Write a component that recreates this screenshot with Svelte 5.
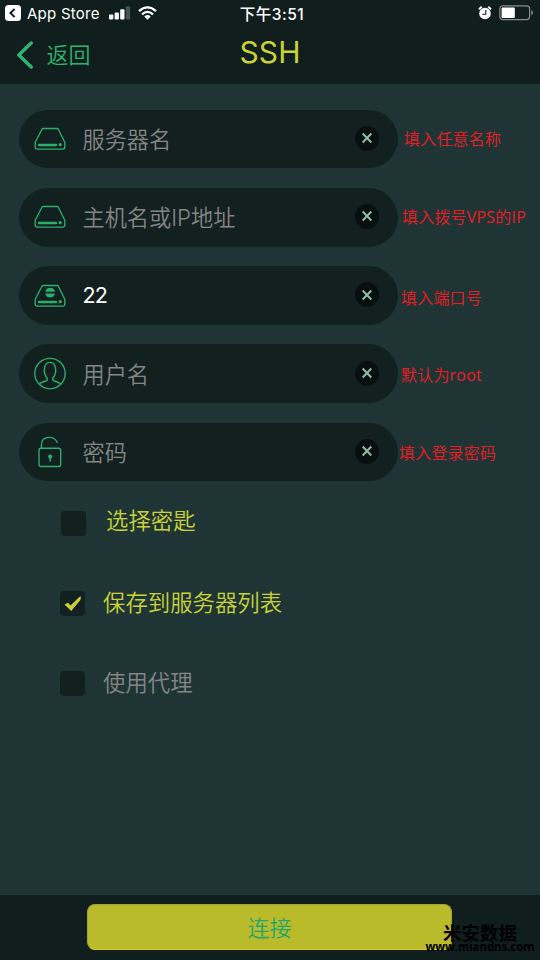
<script>
  const fields = [
    { icon: 'drive', hint: '服务器名', note: '填入任意名称', noteLeft: 6, noteDrop: 0 },
    { icon: 'drive', hint: '主机名或IP地址', note: '填入拨号VPS的IP', noteLeft: 4, noteDrop: 0 },
    { icon: 'port', value: '22', note: '填入端口号', noteLeft: 3, noteDrop: 2 },
    { icon: 'user', hint: '用户名', note: '默认为root', noteLeft: 3, noteDrop: 1.5 },
    { icon: 'lock', hint: '密码', note: '填入登录密码', noteLeft: 1, noteDrop: 0.5 }
  ];
  const options = [
    { label: '选择密匙', tone: 'lit', checked: false, left: 61, gap: 20, lift: 3 },
    { label: '保存到服务器列表', tone: 'lit', checked: true, left: 60, gap: 18, lift: 1 },
    { label: '使用代理', tone: 'dim', checked: false, left: 60, gap: 18, lift: 1 }
  ];
</script>

<main class="screen">
  <header>
    <div class="status">
      <div class="left">
        <svg class="back-app" width="16" height="16" viewBox="0 0 16 16"><rect width="16" height="16" rx="3.5" fill="#fff" /><path d="M9.6 4 5.4 8l4.2 4" fill="none" stroke="#101e1d" stroke-width="1.9" /></svg>
        <span class="store">App Store</span>
        <svg class="signal" width="22" height="14" viewBox="0 0 22 14" fill="#fff"><rect x="0" y="8.5" width="4.3" height="5" rx="1" /><rect x="5.6" y="6.5" width="4.3" height="7" rx="1" /><rect x="11.2" y="3.3" width="4.3" height="10.2" rx="1" /><rect x="16.8" y="0.3" width="4.3" height="13.2" rx="1" fill="#475352" /></svg>
        <svg class="wifi" width="19" height="14" viewBox="0 0 19 14"><g fill="none" stroke="#fff" stroke-width="2.3"><path d="M1 5.2Q9.5-2.4 18 5.2" /><path d="M4 8.4Q9.5 3.4 15 8.4" /></g><path d="M6.3 10.4Q9.5 7.8 12.7 10.4L9.5 13.7z" fill="#fff" /></svg>
      </div>
      <span class="time">下午3:51</span>
      <div class="right">
        <svg width="14" height="14" viewBox="0 0 14 14"><circle cx="7" cy="7.5" r="5.8" fill="#fff" /><path d="M1 3.3 3.8.7M13 3.3 10.2.7" stroke="#fff" stroke-width="1.9" /><path d="M7.8 4v4.2H4.2" fill="none" stroke="#101e1d" stroke-width="1.1" /></svg>
        <svg width="35" height="16" viewBox="0 0 35 16"><rect x=".8" y=".8" width="29.8" height="13.8" rx="3" fill="none" stroke="#858b8a" stroke-width="1.2" /><rect x="2.6" y="2.6" width="13.2" height="10.4" rx="1" fill="#fff" /><path d="M32.3 5q1.7 1 1.7 2.7t-1.7 2.7z" fill="#858b8a" /></svg>
      </div>
    </div>
    <nav>
      <div class="back">
        <svg width="18" height="28" viewBox="0 0 18 28"><path d="M15.2 2 2.8 14l12.4 12" fill="none" stroke="#30b46f" stroke-width="3.4" stroke-linecap="round" stroke-linejoin="round" /></svg>
        <span>返回</span>
      </div>
      <h1>SSH</h1>
      <span class="balance"></span>
    </nav>
  </header>

  <section class="form">
    {#each fields as f}
      <div class="row">
        <div class="pill">
          <svg class="icon" width="32" height="34" viewBox="0 0 32 34" fill="none" stroke="#2eae6b" stroke-width="1.35" stroke-linejoin="round">
            {#if f.icon === 'drive' || f.icon === 'port'}
              <path d="M1.2 20.2 8 7.2q.4-.7 1.2-.7h13.9q.8 0 1.2.7l6.5 13v4.9q0 2-2 2H3.2q-2 0-2-2z" />
              <path d="M5 23h17" stroke-width="2.5" stroke-linecap="round" />
              <circle cx="26.2" cy="22.7" r="1.6" fill="#2eae6b" stroke="none" />
              {#if f.icon === 'port'}
                <path d="M11.2 12.8a5 5 0 0 1 9.8 0zM11.2 14.4a5 5 0 0 0 9.8 0z" fill="#2eae6b" stroke="none" />
              {/if}
            {:else if f.icon === 'user'}
              <circle cx="16" cy="16.6" r="15.2" />
              <path d="M5.2 27.2q1.2-1.5 6.5-3.2 2.2-.8 1.4-3-3.2-3.5-2.7-9Q11 5.4 16 5.4t5.6 6.6q.5 5.5-2.7 9-.8 2.2 1.4 3 5.3 1.7 6.5 3.2" />
            {:else}
              <rect x="5" y="13.2" width="21.7" height="18.3" rx="2" />
              <path d="M7.4 13V10q0-7.6 8-7.6 5.6 0 8 5.3" />
              <circle cx="16.2" cy="21.5" r="2.1" fill="#2eae6b" stroke="none" /><path d="M16.2 22v4.5" stroke-width="1.7" />
            {/if}
          </svg>
          <span class={f.value ? 'value' : 'hint'}>{f.value ?? f.hint}</span>
          <span class="clear"><svg width="12" height="12" viewBox="0 0 12 12"><path d="m1.7 1.5 8.6 9m0-9-8.6 9" stroke="#91bba5" stroke-width="2" /></svg></span>
        </div>
        <span class="note" style="margin-left: {f.noteLeft}px; padding-top: {f.noteDrop * 2}px">{f.note}</span>
      </div>
    {/each}
  </section>

  <section class="options">
    {#each options as o}
      <div class="option" style="padding-left: {o.left}px; gap: {o.gap}px">
        <span class="box">
          {#if o.checked}
            <svg width="18" height="17" viewBox="0 0 18 17"><path d="M.5 9.4 4 7.8l2.6 2.8L15 2.2l2-.9L16.4 5 7.2 16z" fill="#c8d035" /></svg>
          {/if}
        </span>
        <span class="label {o.tone}" style="padding-bottom: {o.lift * 2}px">{o.label}</span>
      </div>
    {/each}
  </section>

  <footer>
    <button>连接</button>
    <div class="mark"><b>米安数据</b><span>www.miandns.com</span></div>
  </footer>
</main>

<style>
  :global(body) { margin: 0; background: #1f3535; }
  .screen {
    width: 540px; height: 960px; box-sizing: border-box; overflow: hidden;
    display: flex; flex-direction: column; background: #1f3535;
    font-family: Inter, 'Noto Sans CJK SC DemiLight', 'Noto Sans CJK SC', sans-serif; font-weight: 350;
  }
  header { height: 84px; flex: none; background: #101e1d; }
  .status { height: 28px; display: grid; grid-template-columns: 1fr auto 1fr; align-items: center; color: #fff; }
  .left { display: flex; align-items: center; padding: 0 0 2px 5px; }
  .store { font-size: 15px; font-weight: 400; margin-left: 6px; width: 82px; letter-spacing: .25px; }
  .signal { margin-right: 7px; }
  .time { font: 500 15.5px/27px Inter, 'Noto Sans CJK SC', sans-serif; letter-spacing: .5px; padding: 0 0 0 4px; }
  .right { display: flex; align-items: center; justify-content: flex-end; gap: 7px; padding: 0 6px 2px 0; }
  nav { display: grid; grid-template-columns: 1fr auto 1fr; height: 54px; align-items: center; }
  .back { display: flex; align-items: center; gap: 12.5px; padding-left: 16px; color: #30b46f; font-size: 22px; line-height: 28px; }
  h1 { margin: 0; padding-bottom: 7px; font-weight: 400; font-size: 30px; line-height: 34px; color: #cad237; letter-spacing: .1px; }
  .form { flex: none; padding: 25.6px 0 0 19px; display: flex; flex-direction: column; gap: 19.6px; }
  .row { display: flex; align-items: center; height: 58.7px; white-space: nowrap; }
  .pill { width: 379px; height: 100%; box-sizing: border-box; flex: none; display: flex; align-items: center; padding: 0 19.5px 0 15px; border-radius: 30px; background: #122120; }
  .icon { flex: none; }
  .hint, .value { flex: 1; margin-left: 16.5px; font-size: 22.2px; line-height: 30px; color: #858585; padding-top: 2px; }
  .value { font-size: 21.5px; font-weight: 400; color: #fff; letter-spacing: -.8px; padding: 0 0 1.5px; }
  .clear { width: 23.5px; height: 25px; margin-bottom: 1.5px; border-radius: 50%; background: #090f10; display: flex; align-items: center; justify-content: center; }
  .note { color: #ed1c24; font: 400 16px/20px 'Open Sans', 'Noto Sans CJK SC DemiLight', 'Noto Sans CJK SC', sans-serif; letter-spacing: .2px; }
  .options { flex: 1; padding-top: 30px; display: flex; flex-direction: column; gap: 55px; }
  .option { display: flex; align-items: center; height: 25px; }
  .box { width: 25px; height: 25px; flex: none; border-radius: 4px; background: #122120; display: flex; align-items: center; justify-content: center; }
  .label { font-size: 22.4px; line-height: 25px; }
  .lit { color: #cad237; }
  .dim { color: #858585; }
  footer { position: relative; flex: none; height: 65px; box-sizing: border-box; padding: 9px 88px 0 87px; background: #101e1d; }
  button { display: block; width: 100%; height: 46px; padding: 0 0 1px; border: 1px solid #a5a72c; border-bottom-color: #cfd12b; border-radius: 8px; background: #babb2b; color: #22a66e; font: 350 22px/43px 'Noto Sans CJK SC DemiLight', 'Noto Sans CJK SC', sans-serif; }
  .mark { position: absolute; right: 7px; top: 27px; width: 106px; display: flex; flex-direction: column; align-items: center; color: #000; }
  .mark b { font: 700 18.5px/20px 'Noto Sans CJK SC', sans-serif; }
  .mark span { font: 700 11.5px/11px 'Open Sans', sans-serif; letter-spacing: -.1px; margin-top: -1px; }
</style>
